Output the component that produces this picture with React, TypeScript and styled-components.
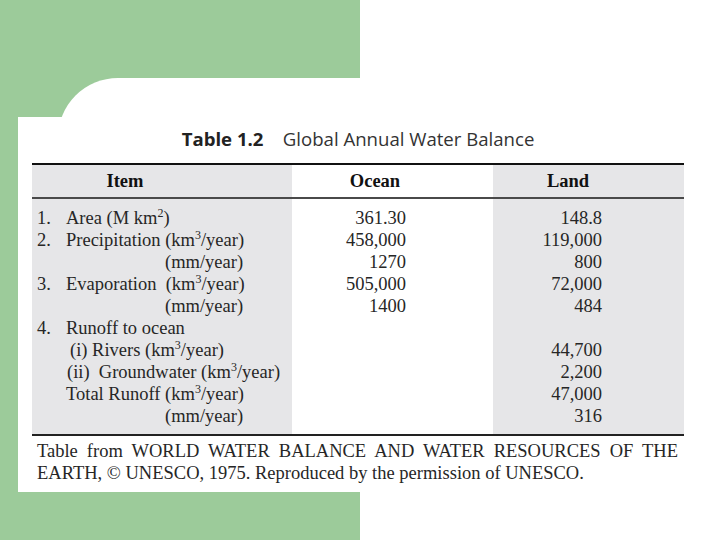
import React from "react";
import styled, { createGlobalStyle } from "styled-components";

const GREEN = "#9ccb9a";
const GRAY = "#e6e6e8";

const Global = createGlobalStyle`
  html, body { margin: 0; padding: 0; background: #ffffff; }
  #root { width: 720px; height: 540px; }
`;

const Page = styled.div`
  width: 720px;
  height: 540px;
  background: linear-gradient(to right, ${GREEN} 0, ${GREEN} 360px, #ffffff 360px);
  display: flex;
  flex-direction: column;
  overflow: hidden;
`;

const TopBand = styled.div`
  height: 78px;
  flex: none;
`;

const TabRow = styled.div`
  height: 39px;
  flex: none;
  padding-left: 58px;
  overflow: hidden;
`;

const TabShape = styled.div`
  height: 90px;
  background: #ffffff;
  border-top-left-radius: 60px;
`;

const Slide = styled.div`
  height: 375px;
  flex: none;
  margin-left: 18px;
  background: #ffffff;
  padding: 9px 0 0 14px;
  box-sizing: border-box;
`;

const Title = styled.div`
  width: 652px;
  text-align: center;
  font-family: "Open Sans", "Lato", sans-serif;
  font-size: 18.6px;
  line-height: 25px;
  color: #333;
  white-space: pre;
`;

const TitleNum = styled.span`
  font-weight: 700;
  color: #222;
`;

const Table = styled.div`
  margin-top: 12px;
  width: 652px;
  display: grid;
  grid-template-columns: 260px 201px 191px;
  border-top: 2px solid #111;
  border-bottom: 2px solid #222;
  font-family: "Liberation Serif", "Times New Roman", serif;
  font-size: 18.5px;
  color: #262626;
`;

const HeadCell = styled.div<{ $shade: boolean; $pr: number }>`
  height: 32px;
  line-height: 32px;
  text-align: center;
  font-weight: 700;
  color: #111;
  padding-right: ${(p) => p.$pr}px;
  background: ${(p) => (p.$shade ? GRAY : "#ffffff")};
  border-bottom: 2px solid #4a4a4a;
`;

const BodyCol = styled.div<{ $shade: boolean; $right?: number }>`
  background: ${(p) => (p.$shade ? GRAY : "#ffffff")};
  padding: 8px ${(p) => p.$right ?? 0}px 7px 5px;
  display: flex;
  flex-direction: column;
  align-items: ${(p) => (p.$right !== undefined ? "flex-end" : "flex-start")};
`;

const Line = styled.div<{ $indent?: number }>`
  height: 22px;
  line-height: 22px;
  white-space: pre;
  padding-left: ${(p) => p.$indent ?? 0}px;
`;

const Num = styled.span`
  display: inline-block;
  width: 29px;
`;

const Sup = styled.sup`
  font-size: 12px;
  line-height: 0;
  vertical-align: 7px;
`;

const Caption = styled.div`
  width: 641px;
  margin: 4px 0 0 5px;
  font-family: "Liberation Serif", "Times New Roman", serif;
  font-size: 18.5px;
  line-height: 22px;
  color: #262626;
  text-align: justify;
`;

const km = (n: string) => (
  <>
    (km<Sup>{n}</Sup>/year)
  </>
);

const items: { num?: string; indent?: number; content: React.ReactNode }[] = [
  { num: "1.", content: <>Area (M km<Sup>2</Sup>)</> },
  { num: "2.", content: <>Precipitation {km("3")}</> },
  { indent: 128, content: "(mm/year)" },
  { num: "3.", content: <>Evaporation  {km("3")}</> },
  { indent: 128, content: "(mm/year)" },
  { num: "4.", content: "Runoff to ocean" },
  { indent: 33, content: <>(i) Rivers {km("3")}</> },
  { indent: 30, content: <>(ii)  Groundwater {km("3")}</> },
  { indent: 29, content: <>Total Runoff {km("3")}</> },
  { indent: 128, content: "(mm/year)" },
];

const ocean = ["361.30", "458,000", "1270", "505,000", "1400", "", "", "", "", ""];
const land = ["148.8", "119,000", "800", "72,000", "484", "", "44,700", "2,200", "47,000", "316"];

export default function App() {
  return (
    <>
      <Global />
      <Page>
        <TopBand />
        <TabRow>
          <TabShape />
        </TabRow>
        <Slide>
          <Title>
            <TitleNum>Table 1.2</TitleNum>    Global Annual Water Balance
          </Title>
          <Table>
            <HeadCell $shade $pr={74}>Item</HeadCell>
            <HeadCell $shade={false} $pr={35}>Ocean</HeadCell>
            <HeadCell $shade $pr={41}>Land</HeadCell>
            <BodyCol $shade>
              {items.map((it, i) => (
                <Line key={i} $indent={it.indent}>
                  {it.num && <Num>{it.num}</Num>}
                  {it.content}
                </Line>
              ))}
            </BodyCol>
            <BodyCol $shade={false} $right={87}>
              {ocean.map((v, i) => (
                <Line key={i}>{v}</Line>
              ))}
            </BodyCol>
            <BodyCol $shade $right={82}>
              {land.map((v, i) => (
                <Line key={i}>{v}</Line>
              ))}
            </BodyCol>
          </Table>
          <Caption>
            Table from WORLD WATER BALANCE AND WATER RESOURCES OF THE EARTH, © UNESCO, 1975. Reproduced by the permission of UNESCO.
          </Caption>
        </Slide>
      </Page>
    </>
  );
}
